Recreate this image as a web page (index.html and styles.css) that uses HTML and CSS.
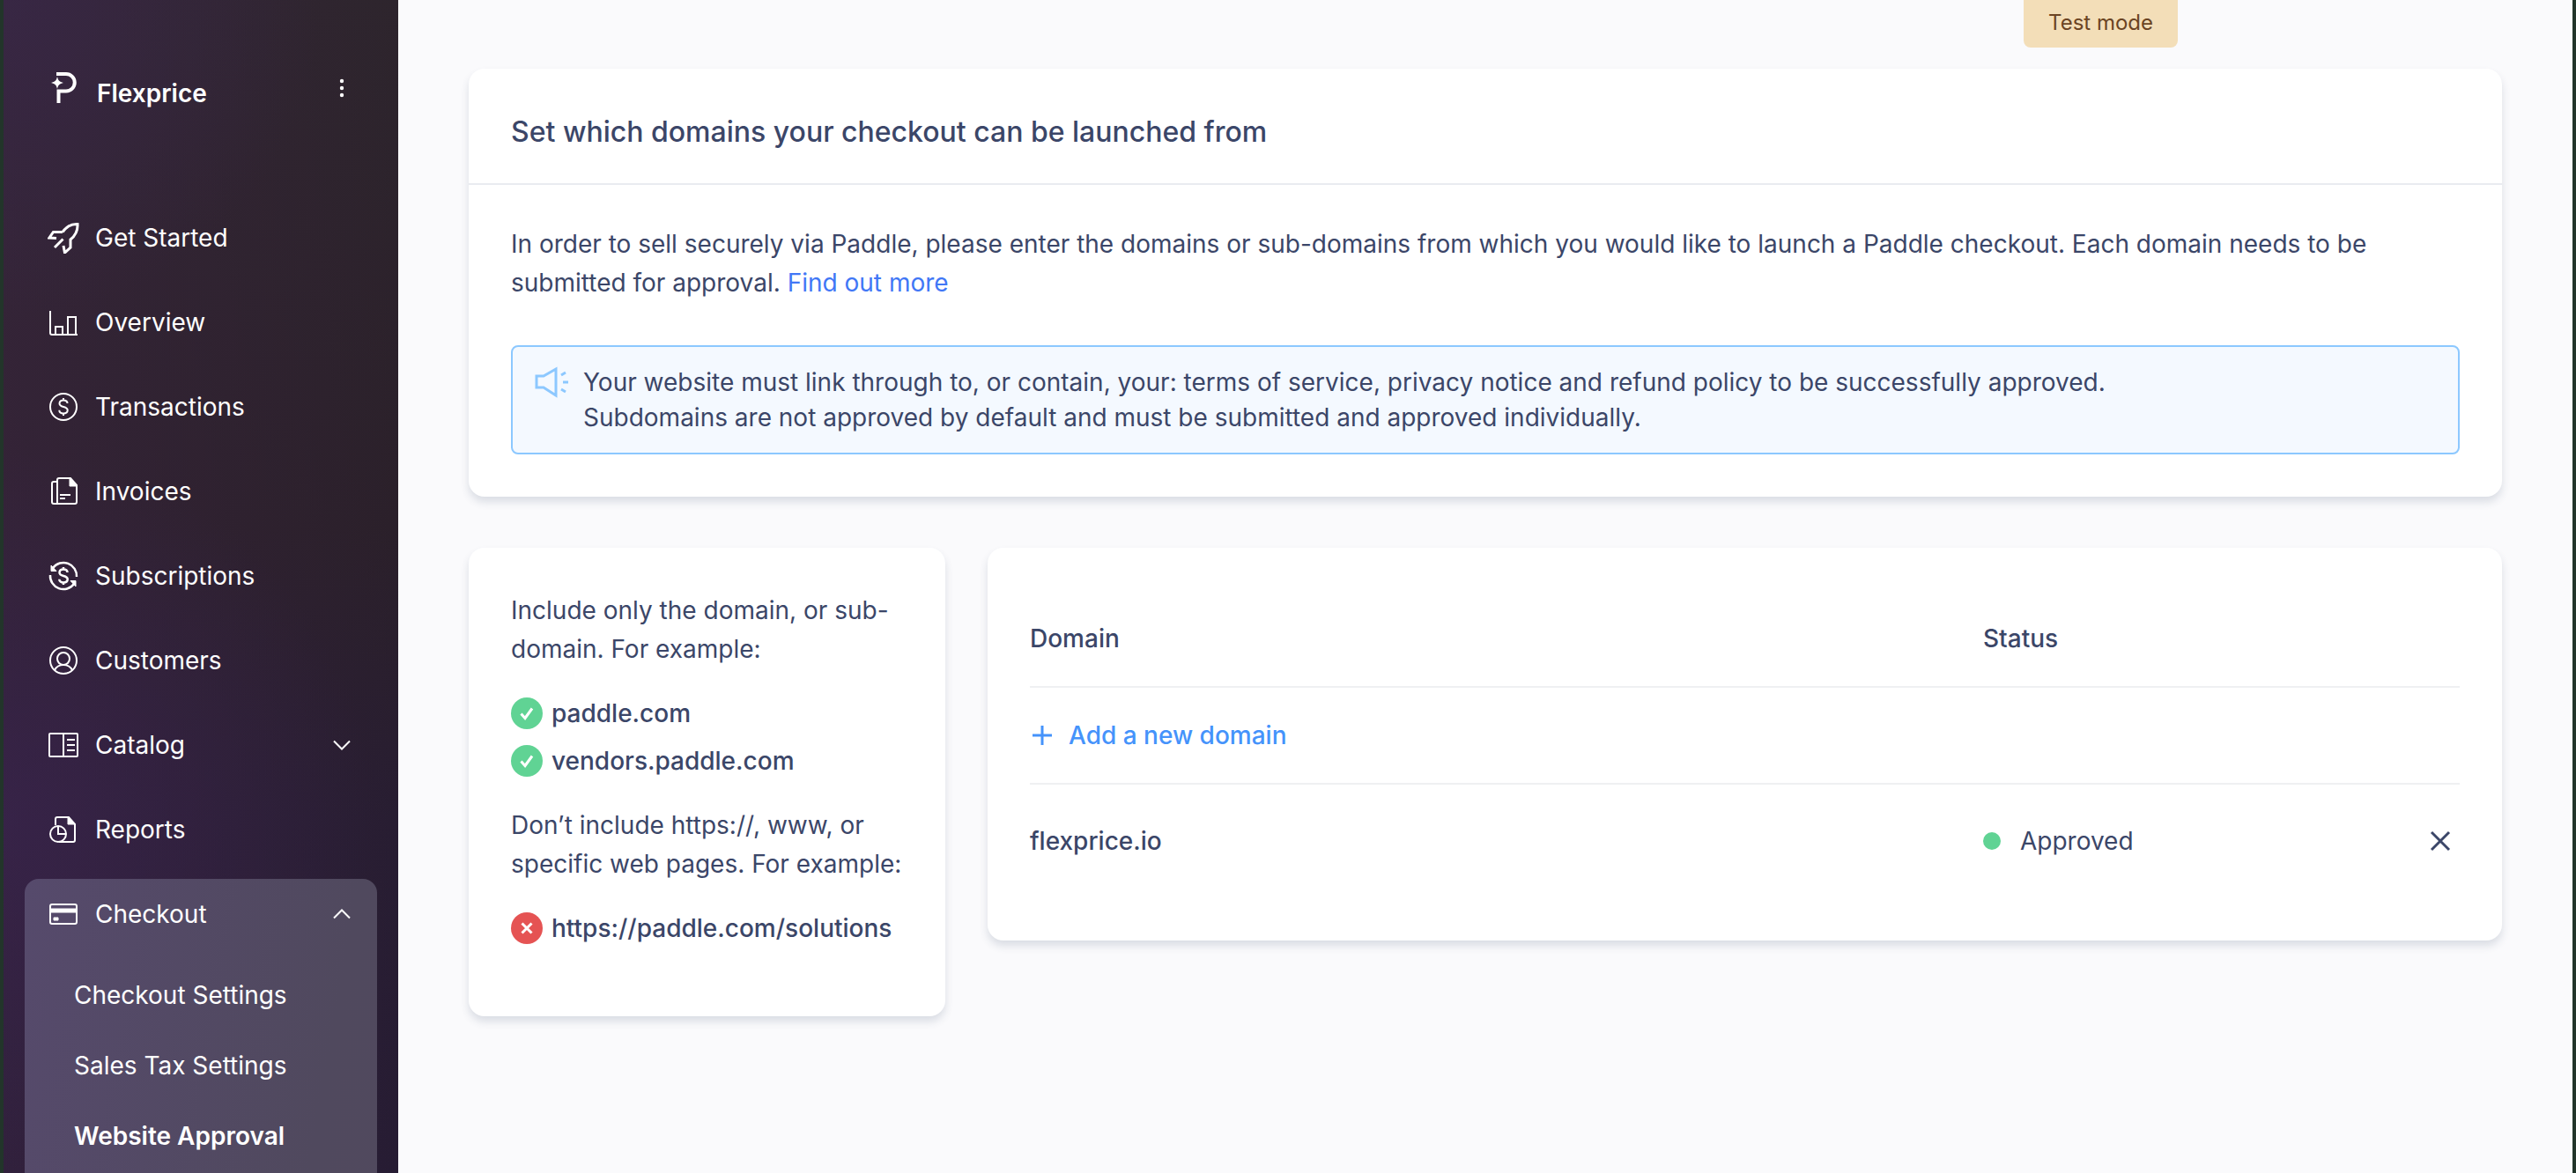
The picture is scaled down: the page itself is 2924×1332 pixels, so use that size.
FILE: index.html
```html
<!DOCTYPE html>
<html lang="en">
<head>
  <meta charset="UTF-8" />
  <meta name="viewport" content="width=device-width, initial-scale=1.0" />
  <title>Website Approval</title>
  <link rel="stylesheet" href="styles.css">
</head>
<body>
<div class="layout">

  <!-- Sidebar -->
  <aside class="sidebar">
    <div class="brand">
      <svg class="brand-logo" viewBox="0 0 36 44" aria-hidden="true">
        <path d="M10 6h11a9.750 9.750 0 0 1 0 19.500h-8.500V39" fill="none" stroke="currentColor" stroke-width="4"/>
        <path d="M11 9c1 4.500 2.500 6 7 7-4.500 1-6 2.500-7 7-1-4.500-2.500-6-7-7 4.500-1 6-2.500 7-7z" fill="currentColor"/>
      </svg>
      <span class="brand-name">Flexprice</span>
      <button class="brand-menu" type="button" aria-label="Account menu">
        <svg class="chevron" viewBox="0 0 28 28" fill="currentColor"><circle cx="14" cy="6" r="2.200"/><circle cx="14" cy="14" r="2.200"/><circle cx="14" cy="22" r="2.200"/></svg>
      </button>
    </div>

    <nav class="nav">
      <a class="nav-item" href="#">
        <svg class="icon bold" viewBox="0 0 36 36"><path d="M17 11.500C21 6 26 2 34 2.500 34.500 10.500 31 16 26 20v9l-6.500 6L18 27M17 11.500H6.500L2 18l8 .5M8 29l9.500-9.500"/></svg>
        Get Started
      </a>
      <a class="nav-item" href="#">
        <svg class="icon" viewBox="0 0 36 36"><path d="M3 5v25q0 2 2 2h29M9 32v-9h8v9M23 32V12h9v20"/></svg>
        Overview
      </a>
      <a class="nav-item" href="#">
        <svg class="icon" viewBox="0 0 36 36"><circle cx="18" cy="18" r="15"/><path d="M22.500 14c0-2.300-2-3.500-4.500-3.500s-4.500 1.300-4.500 3.700c0 5 9.200 2.500 9.200 7.500 0 2.500-2.200 3.700-4.700 3.700s-4.700-1.300-4.700-3.700M18 8v2.500M18 25.500V28"/></svg>
        Transactions
      </a>
      <a class="nav-item" href="#">
        <svg class="icon" viewBox="0 0 36 36"><path d="M11 7H7q-2 0-2 2v21q0 2 2 2h24q2 0 2-2V11l-7-8H13q-2 0-2 2v27M14 22h12M14 26h6"/><path class="fill" d="M25 3v9h8z"/></svg>
        Invoices
      </a>
      <a class="nav-item" href="#">
        <svg class="icon" viewBox="0 0 36 36"><path stroke-width="2.500" d="M3 17A15 15 0 0 0 30 27M33 19A15 15 0 0 0 6 9M22.500 14c0-2.300-2-3.500-4.500-3.500s-4.500 1.300-4.500 3.700c0 5 9.200 2.500 9.200 7.500 0 2.500-2.200 3.700-4.700 3.700s-4.700-1.300-4.700-3.700M18 8v2.500M18 25.500V28"/><path class="fill" d="M4 6v6.500h6zM32 30v-6.500h-6z"/></svg>
        Subscriptions
      </a>
      <a class="nav-item" href="#">
        <svg class="icon" viewBox="0 0 36 36"><circle cx="18" cy="18" r="15"/><circle cx="18" cy="16" r="7"/><path d="M8 29c2-4 6-6 10-6s8 2 10 6"/></svg>
        Customers
      </a>
      <button class="nav-item" type="button" aria-expanded="false">
        <svg class="icon" viewBox="0 0 36 36"><rect x="2" y="5" width="32" height="26" rx="1"/><path d="M18 5v26M22 12h9M22 18h9M22 24h9"/></svg>
        Catalog
        <svg class="chevron" viewBox="0 0 28 28"><path d="M5 9.500l9 9 9-9"/></svg>
      </button>
      <a class="nav-item" href="#">
        <svg class="icon" viewBox="0 0 36 36"><circle cx="12" cy="23" r="9"/><path d="M9 13V6q0-2 2-2h13l7 8v18q0 2-2 2H13M12 14v9h9"/><path class="fill" d="M23 4v8h8z"/></svg>
        Reports
      </a>

      <div class="nav-group">
        <button class="nav-item" type="button" aria-expanded="true">
          <svg class="icon" viewBox="0 0 36 36"><rect x="3" y="7" width="30" height="22" rx="2"/><path class="fill" d="M3 12h30v4H3zM7 22h5v3H7z"/></svg>
          Checkout
          <svg class="chevron" viewBox="0 0 28 28"><path d="M5 18.500l9-9 9 9"/></svg>
        </button>
        <div class="subnav">
          <a class="subnav-item" href="#">Checkout Settings</a>
          <a class="subnav-item" href="#">Sales Tax Settings</a>
          <a class="subnav-item active" href="#">Website Approval</a>
        </div>
      </div>
    </nav>
  </aside>

  <!-- Content -->
  <main class="content">
    <div class="test-mode">Test mode</div>

    <section class="card intro">
      <h1 class="intro-title">Set which domains your checkout can be launched from</h1>
      <div class="intro-body">
        <p>In order to sell securely via Paddle, please enter the domains or sub-domains from which you would like to launch a Paddle checkout. Each domain needs to be submitted for approval. <a href="#">Find out more</a></p>
        <div class="notice">
          <svg class="notice-icon" viewBox="0 0 40 40" aria-hidden="true"><path d="M3 13h8L25 5v30L11 26H3zM31 12l5-3M33 20h6M31 28l5 3"/></svg>
          <p>Your website must link through to, or contain, your: terms of service, privacy notice and refund policy to be successfully approved.<br>Subdomains are not approved by default and must be submitted and approved individually.</p>
        </div>
      </div>
    </section>

    <section class="card help">
      <p>Include only the domain, or sub-domain. For example:</p>
      <ul class="examples">
        <li>
          <svg class="mark" viewBox="0 0 36 36"><circle cx="18" cy="18" r="18" fill="#60d394"/><path d="M11.500 18.500l4.500 5 8-11"/></svg>
          paddle.com
        </li>
        <li>
          <svg class="mark" viewBox="0 0 36 36"><circle cx="18" cy="18" r="18" fill="#60d394"/><path d="M11.500 18.500l4.500 5 8-11"/></svg>
          vendors.paddle.com
        </li>
      </ul>
      <p>Don’t include https://, www, or specific web pages. For example:</p>
      <ul class="examples">
        <li>
          <svg class="mark" viewBox="0 0 36 36"><circle cx="18" cy="18" r="18" fill="#e55353"/><path d="M12.500 12.500l11 11M23.500 12.500l-11 11"/></svg>
          https://paddle.com/solutions
        </li>
      </ul>
    </section>

    <section class="card domains">
      <table class="domain-table">
        <thead>
          <tr>
            <th class="col-domain">Domain</th>
            <th class="col-status" colspan="2">Status</th>
          </tr>
        </thead>
        <tbody>
          <tr>
            <td colspan="3">
              <button class="add-domain" type="button">
                <svg viewBox="0 0 28 28" aria-hidden="true"><path d="M14 3v22M3 14h22"/></svg>
                Add a new domain
              </button>
            </td>
          </tr>
          <tr class="domain-row">
            <th scope="row">flexprice.io</th>
            <td><span class="status">Approved</span></td>
            <td class="col-action">
              <button class="remove" type="button" aria-label="Remove flexprice.io">
                <svg viewBox="0 0 28 28"><path d="M4 4l20 20M24 4L4 24"/></svg>
              </button>
            </td>
          </tr>
        </tbody>
      </table>
    </section>
  </main>
</div>
</body>
</html>
```
FILE: styles.css
```css
* {
  box-sizing: border-box;
}

body {
  margin: 0;
  font-family: Inter, "Liberation Sans", sans-serif;
  font-size: 28px;
  line-height: 44px;
  color: #3b4668;
  background: #fafafc;
}

h1, p, ul {
  margin: 0;
  padding: 0;
}

a {
  text-decoration: none;
}

button {
  border: 0;
  padding: 0;
  background: none;
  font: inherit;
  color: inherit;
  cursor: pointer;
}

svg {
  display: block;
  flex: none;
  fill: none;
  stroke: currentColor;
  stroke-width: 2;
}

.layout {
  display: flex;
  height: 100vh;
  overflow: hidden;
  border-left: 4px solid #22352a;
  border-right: 4px solid #22352a;
}

/* Sidebar */
.sidebar {
  flex: none;
  width: 448px;
  padding: 78px 24px 0;
  color: #fff;
  background:
    radial-gradient(circle at 0 0, rgba(58, 40, 76, 0.6), transparent 360px),
    radial-gradient(circle at 0 70%, rgba(58, 36, 80, 0.6), transparent 420px),
    linear-gradient(90deg, rgba(56, 36, 62, 0.6), rgba(40, 30, 40, 0.3)),
    linear-gradient(#30282f, #2c212b 45%, #281d36 70%, #261b38);
}

.brand {
  display: flex;
  align-items: flex-start;
  height: 152px;
  padding: 0 26px;
}

.brand-logo {
  width: 36px;
  height: 44px;
  stroke: none;
}

.brand-name {
  flex: 1;
  padding: 6px 0 0 20px;
  font-weight: 600;
}

.brand-menu {
  padding-top: 8px;
}

.brand-menu svg {
  fill: currentColor;
  stroke: none;
}

.nav {
  display: flex;
  flex-direction: column;
  gap: 16px;
}

.nav-item {
  display: flex;
  align-items: center;
  gap: 18px;
  width: 100%;
  height: 80px;
  padding: 0 26px;
  color: #fff;
}

.icon {
  width: 36px;
  height: 36px;
}

.icon.bold {
  stroke-width: 3;
}

.icon .fill {
  fill: currentColor;
  stroke-width: 1;
}

.chevron {
  width: 28px;
  height: 28px;
  margin-left: auto;
}

.nav-group {
  height: 100vh;
  border-radius: 16px;
  background: linear-gradient(100deg, #564a6c, #50495e 60%, #52495e);
}

.subnav {
  margin-top: 12px;
}

.subnav-item {
  display: flex;
  align-items: center;
  height: 80px;
  padding-left: 56px;
  color: #fff;
}

.subnav-item.active {
  font-weight: 600;
}

/* Content */
.content {
  position: relative;
  flex: 1;
  display: grid;
  grid-template-columns: repeat(12, 1fr);
  gap: 58px 48px;
  align-content: start;
  align-items: start;
  padding: 78px 80px;
}

.test-mode {
  position: absolute;
  top: 0;
  right: 448px;
  padding: 6px 28px 8px;
  border-radius: 0 0 8px 8px;
  background: #f3deb8;
  color: #6b4423;
  font-size: 24px;
  line-height: 40px;
}

.card {
  border-radius: 18px;
  background: #fff;
  box-shadow: 0 6px 10px rgba(59, 74, 107, 0.16);
}

.intro {
  grid-column: span 12;
}

.intro-title {
  padding: 50px 48px 36px;
  border-bottom: 2px solid #e9ebf0;
  font-size: 32px;
  font-weight: 500;
}

.intro-body {
  padding: 45px 48px 48px;
}

.intro-body a {
  color: #4177f6;
}

.notice {
  display: flex;
  gap: 16px;
  margin-top: 49px;
  padding: 20px 24px;
  border: 2px solid #8cc8ff;
  border-radius: 8px;
  background: #f4f9ff;
  line-height: 40px;
}

.notice-icon {
  width: 40px;
  height: 40px;
  color: #8cc8ff;
  stroke-width: 3;
}

.help {
  grid-column: span 3;
  padding: 49px 48px 73px;
}

.examples {
  margin: 24px 0;
  list-style: none;
  font-weight: 500;
}

.examples:last-child {
  margin-bottom: 0;
}

.examples li {
  display: flex;
  align-items: center;
  gap: 10px;
  height: 54px;
}

.mark {
  width: 36px;
  height: 36px;
  stroke: #fff;
  stroke-width: 3;
}

.mark circle {
  stroke: none;
}

/* Domain table */
.domains {
  grid-column: span 9;
  padding: 49px 48px;
}

.domain-table {
  width: 100%;
  border-collapse: separate;
  border-spacing: 0;
  table-layout: fixed;
}

.domain-table th,
.domain-table td {
  height: 110px;
  padding: 0;
  border-bottom: 2px solid #eff0f2;
  text-align: left;
}

.domain-table th {
  font-weight: 500;
}

.col-domain {
  width: 66.666%;
}

.domain-table .domain-row th,
.domain-table .domain-row td {
  height: 128px;
  border-bottom: 0;
}

.add-domain {
  display: flex;
  align-items: center;
  gap: 16px;
  color: #4593fb;
  font-weight: 500;
}

.add-domain svg,
.remove svg {
  width: 28px;
  height: 28px;
  stroke-width: 3;
}

.status {
  display: flex;
  align-items: center;
  gap: 22px;
}

.status::before {
  content: "";
  width: 20px;
  height: 20px;
  border-radius: 50%;
  background: #60d394;
}

.remove {
  display: block;
  margin: 0 8px 0 auto;
}
```
